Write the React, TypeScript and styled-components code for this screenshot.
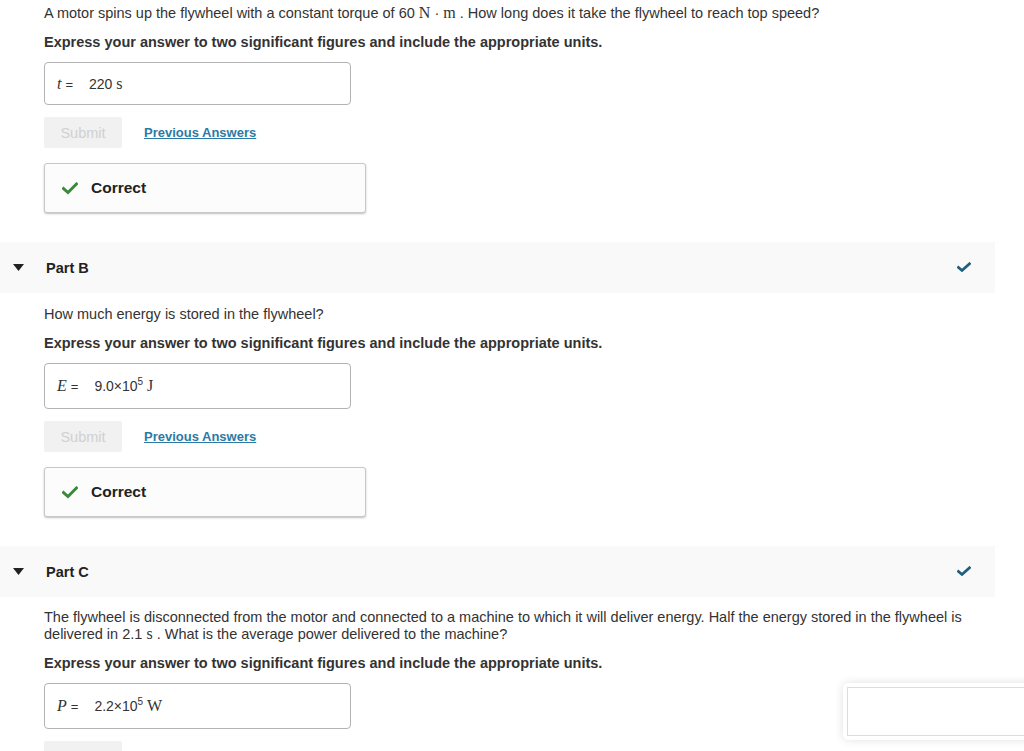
import React from "react";
import styled, { createGlobalStyle } from "styled-components";

const Global = createGlobalStyle`
  html, body { margin: 0; padding: 0; background: #fff; }
  body { font-family: "Liberation Sans", Arial, sans-serif; color: #333; font-size: 14.5px; overflow: hidden; }
`;

const Page = styled.div`
  width: 995px;
  padding-top: 5px;
`;

const Section = styled.div`
  padding-left: 44px;
`;

const Text = styled.p<{ $top?: number }>`
  margin: ${(p) => p.$top ?? 0}px 0 0;
  font-size: 14.5px;
  line-height: 17px;
  color: #333;
  max-width: 940px;
`;

const Instruction = styled.p<{ $top: number }>`
  margin: ${(p) => p.$top}px 0 0;
  font-size: 14.5px;
  line-height: 17px;
  font-weight: bold;
  color: #333;
`;

const Math = styled.span<{ $italic?: boolean }>`
  font-family: "Liberation Serif", "Times New Roman", serif;
  font-size: 16px;
  line-height: 1;
  font-style: ${(p) => (p.$italic ? "italic" : "normal")};
`;

const AnswerBox = styled.div<{ $h: number }>`
  margin-top: 11px;
  width: 307px;
  height: ${(p) => p.$h}px;
  border: 1px solid #b3b3b3;
  border-radius: 4px;
  display: flex;
  align-items: center;
  padding-left: 12px;
  box-sizing: border-box;
  gap: 16px;
`;

const Label = styled.span`
  font-size: 13px;
  color: #333;
  display: inline-flex;
  align-items: baseline;
  gap: 4px;
`;

const Value = styled.span`
  font-size: 14px;
  color: #333;
  sup { font-size: 10px; line-height: 0; }
`;

const Actions = styled.div`
  margin-top: 12px;
  display: flex;
  align-items: center;
  gap: 22px;
`;

const SubmitBtn = styled.button`
  width: 78px;
  height: 31px;
  border: none;
  border-radius: 2px;
  background: #f1f1f1;
  color: #d0d0d0;
  font-family: "Liberation Sans", Arial, sans-serif;
  font-size: 14.5px;
  padding: 0;
`;

const Link = styled.a`
  color: #2c7aa6;
  font-weight: bold;
  font-size: 13px;
  text-decoration: underline;
`;

const CorrectBox = styled.div`
  margin-top: 15px;
  width: 322px;
  height: 50px;
  box-sizing: border-box;
  border: 1px solid #c8c8c8;
  border-radius: 3px;
  background: #fcfcfc;
  box-shadow: 0 1px 2px rgba(0, 0, 0, 0.25);
  display: flex;
  align-items: center;
  padding-left: 17px;
  gap: 13px;
  font-weight: bold;
  font-size: 15.5px;
  color: #222;
`;

const PartHeader = styled.div<{ $top: number }>`
  margin-top: ${(p) => p.$top}px;
  height: 51px;
  background: #f9f9f9;
  display: flex;
  align-items: center;
  padding: 0 24px 0 13px;
`;

const PartTitle = styled.span`
  margin-left: 22px;
  font-weight: bold;
  font-size: 14.5px;
  color: #222;
  flex: 1;
`;

const Overlay = styled.div`
  position: fixed;
  left: 843px;
  top: 683px;
  width: 200px;
  height: 57px;
  background: #fff;
  border-radius: 5px;
  box-shadow: 0 0 10px rgba(0, 0, 0, 0.12);
  padding: 4px;
  box-sizing: border-box;
`;

const OverlayInner = styled.div`
  width: 100%;
  height: 100%;
  border: 1px solid #dcdcdc;
  box-sizing: border-box;
`;

const GreenCheck = () => (
  <svg width="16" height="13" viewBox="0 0 16 13">
    <path d="M1.5 6.5 L6 10.5 L14.5 2" stroke="#3a8a3a" strokeWidth="3" fill="none" strokeLinecap="square" />
  </svg>
);

const BlueCheck = () => (
  <svg width="14" height="11" viewBox="0 0 14 11">
    <path d="M1.5 5.5 L5 8.5 L12.5 1.8" stroke="#1f5f7d" strokeWidth="2.8" fill="none" strokeLinecap="square" />
  </svg>
);

const Triangle = () => (
  <svg width="11" height="7" viewBox="0 0 11 7">
    <path d="M0 0 H11 L5.5 7 Z" fill="#222" />
  </svg>
);

const Submission = ({ top, label, value, h }: { top: number; label: React.ReactNode; value: React.ReactNode; h: number }) => (
  <>
    <Instruction $top={top}>Express your answer to two significant figures and include the appropriate units.</Instruction>
    <AnswerBox $h={h}>
      <Label>{label}</Label>
      <Value>{value}</Value>
    </AnswerBox>
    <Actions>
      <SubmitBtn>Submit</SubmitBtn>
      <Link>Previous Answers</Link>
    </Actions>
    <CorrectBox>
      <GreenCheck />
      <span>Correct</span>
    </CorrectBox>
  </>
);

const Part = ({ name, top }: { name: string; top: number }) => (
  <PartHeader $top={top}>
    <Triangle />
    <PartTitle>{name}</PartTitle>
    <BlueCheck />
  </PartHeader>
);

export default function App() {
  return (
    <Page>
      <Global />
      <Section>
        <Text>
          A motor spins up the flywheel with a constant torque of 60 <Math>N</Math> · <Math>m</Math> . How long does it take the flywheel to reach top speed?
        </Text>
        <Submission
          top={12}
          h={43}
          label={<><Math $italic>t</Math> =</>}
          value={<>220 <Math>s</Math></>}
        />
      </Section>
      <Part name="Part B" top={29} />
      <Section>
        <Text $top={13}>How much energy is stored in the flywheel?</Text>
        <Submission
          top={12}
          h={46}
          label={<><Math $italic>E</Math> =</>}
          value={<>9.0×10<sup>5</sup> <Math>J</Math></>}
        />
      </Section>
      <Part name="Part C" top={29} />
      <Section>
        <Text $top={12}>
          The flywheel is disconnected from the motor and connected to a machine to which it will deliver energy. Half the energy stored in the flywheel is delivered in 2.1 <Math>s</Math> . What is the average power delivered to the machine?
        </Text>
        <Instruction $top={12}>Express your answer to two significant figures and include the appropriate units.</Instruction>
        <AnswerBox $h={46}>
          <Label><Math $italic>P</Math> =</Label>
          <Value>2.2×10<sup>5</sup> <Math>W</Math></Value>
        </AnswerBox>
        <Actions>
          <SubmitBtn>Submit</SubmitBtn>
          <Link>Previous Answers</Link>
        </Actions>
      </Section>
      <Overlay>
        <OverlayInner />
      </Overlay>
    </Page>
  );
}
